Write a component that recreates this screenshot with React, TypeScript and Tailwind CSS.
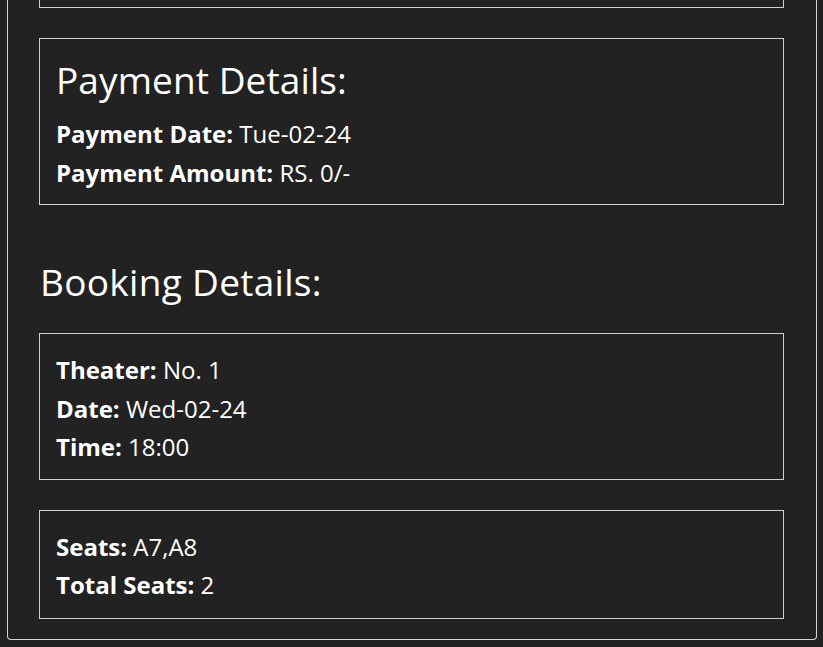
import React from "react";

const font = { fontFamily: '"Open Sans", "Noto Sans", sans-serif' };

function Line({ label, value }: { label: string; value: string }) {
  return (
    <p className="text-[24px] leading-[38.5px] text-white">
      <b className="font-bold">{label}</b> {value}
    </p>
  );
}

export default function App() {
  return (
    <div className="min-h-[647px] w-[823px] bg-[#222222] overflow-hidden" style={font}>
      <div className="ml-[7px] w-[810px] border-x border-b border-[#d4d4d4] rounded-b-[4px] px-[31px] pb-[20px]">
        <div className="h-[8px] w-[745px] border-x border-b border-[#d0d0d0]" />
        <div className="mt-[30px] w-[745px] border border-[#d0d0d0] px-[16px] pt-[19px] pb-[12px]">
          <h2 className="text-[37px] leading-[44px] text-white font-medium tracking-[0.1px]">Payment Details:</h2>
          <div className="mt-[13px]">
            <Line label="Payment Date:" value="Tue-02-24" />
            <Line label="Payment Amount:" value="RS. 0/-" />
          </div>
        </div>
        <div className="mt-[26px] h-[1px] w-[745px] bg-[#1c1c1c]" />
        <h2 className="mt-[28px] ml-[1px] text-[37px] leading-[44px] text-white font-medium tracking-[0.3px]">Booking Details:</h2>
        <div className="mt-[29px] w-[745px] border border-[#d0d0d0] px-[16px] pt-[17px] pb-[12px]">
          <Line label="Theater:" value="No. 1" />
          <Line label="Date:" value="Wed-02-24" />
          <Line label="Time:" value="18:00" />
        </div>
        <div className="mt-[30px] w-[745px] border border-[#d0d0d0] px-[16px] pt-[17px] pb-[13px]">
          <Line label="Seats:" value="A7,A8" />
          <Line label="Total Seats:" value="2" />
        </div>
      </div>
    </div>
  );
}
